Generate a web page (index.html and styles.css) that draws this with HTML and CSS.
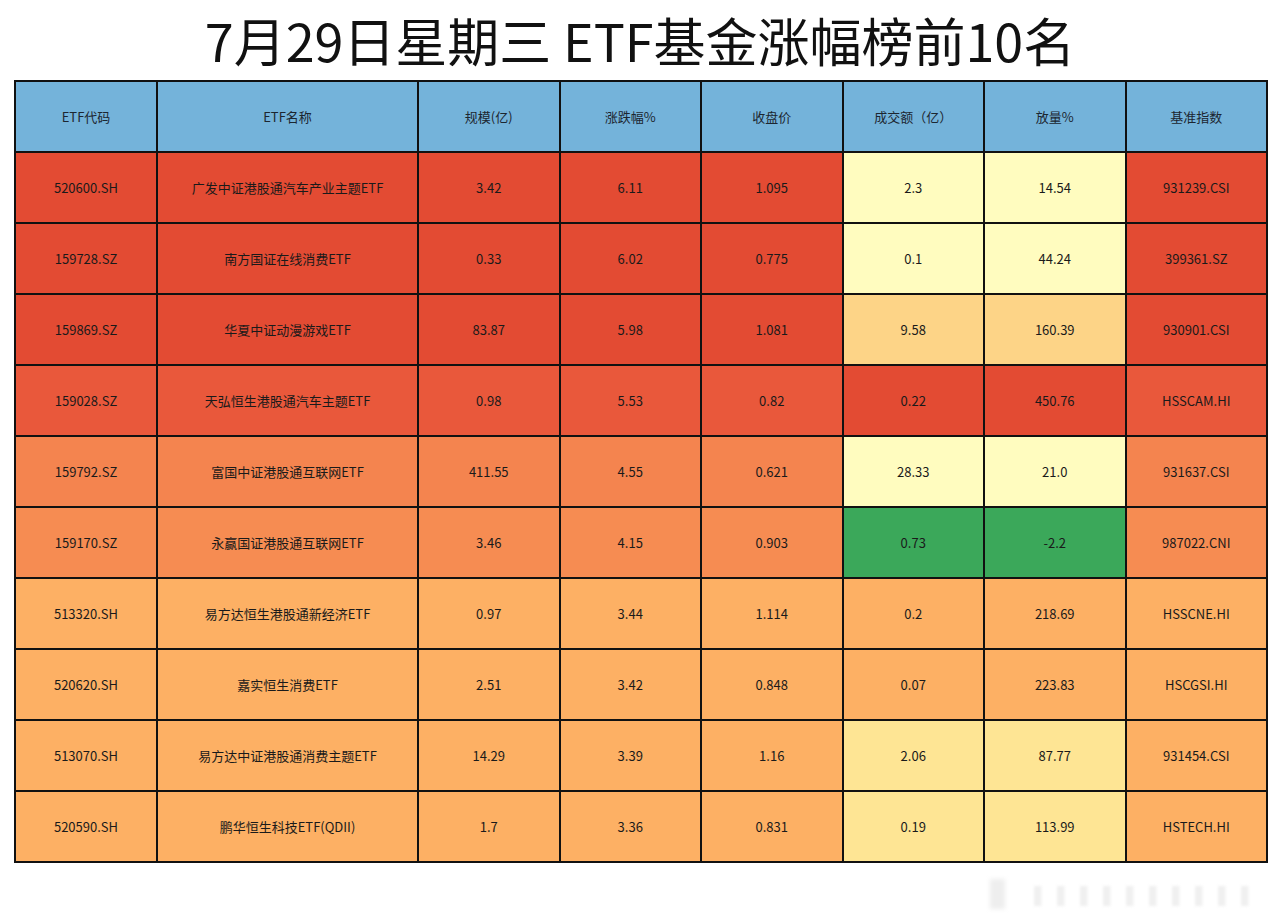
FILE: index.html
```html
<!DOCTYPE html>
<html lang="zh-CN">
<head>
<meta charset="utf-8">
<title>ETF基金涨幅榜前10名</title>
<link rel="stylesheet" href="styles.css">
</head>
<body>
<div class="page">
  <h1 class="title">7月29日星期三 ETF基金涨幅榜前10名</h1>
  <table class="grid">
    <colgroup>
      <col class="w-code"><col class="w-name"><col class="w-std"><col class="w-std"><col class="w-std"><col class="w-std"><col class="w-std"><col class="w-std">
    </colgroup>
    <thead>
      <tr class="head">
        <th>ETF代码</th><th>ETF名称</th><th>规模(亿)</th><th>涨跌幅%</th><th>收盘价</th><th>成交额（亿）</th><th>放量%</th><th>基准指数</th>
      </tr>
    </thead>
    <tbody>
      <tr class="r-red"><td>520600.SH</td><td>广发中证港股通汽车产业主题ETF</td><td>3.42</td><td>6.11</td><td>1.095</td><td class="c-pale">2.3</td><td class="c-pale">14.54</td><td>931239.CSI</td></tr>
      <tr class="r-red"><td>159728.SZ</td><td>南方国证在线消费ETF</td><td>0.33</td><td>6.02</td><td>0.775</td><td class="c-pale">0.1</td><td class="c-pale">44.24</td><td>399361.SZ</td></tr>
      <tr class="r-red"><td>159869.SZ</td><td>华夏中证动漫游戏ETF</td><td>83.87</td><td>5.98</td><td>1.081</td><td class="c-sand">9.58</td><td class="c-sand">160.39</td><td>930901.CSI</td></tr>
      <tr class="r-red2"><td>159028.SZ</td><td>天弘恒生港股通汽车主题ETF</td><td>0.98</td><td>5.53</td><td>0.82</td><td class="c-red">0.22</td><td class="c-red">450.76</td><td>HSSCAM.HI</td></tr>
      <tr class="r-org"><td>159792.SZ</td><td>富国中证港股通互联网ETF</td><td>411.55</td><td>4.55</td><td>0.621</td><td class="c-pale">28.33</td><td class="c-pale">21.0</td><td>931637.CSI</td></tr>
      <tr class="r-org2"><td>159170.SZ</td><td>永赢国证港股通互联网ETF</td><td>3.46</td><td>4.15</td><td>0.903</td><td class="c-green">0.73</td><td class="c-green">-2.2</td><td>987022.CNI</td></tr>
      <tr class="r-lt"><td>513320.SH</td><td>易方达恒生港股通新经济ETF</td><td>0.97</td><td>3.44</td><td>1.114</td><td>0.2</td><td>218.69</td><td>HSSCNE.HI</td></tr>
      <tr class="r-lt"><td>520620.SH</td><td>嘉实恒生消费ETF</td><td>2.51</td><td>3.42</td><td>0.848</td><td>0.07</td><td>223.83</td><td>HSCGSI.HI</td></tr>
      <tr class="r-lt"><td>513070.SH</td><td>易方达中证港股通消费主题ETF</td><td>14.29</td><td>3.39</td><td>1.16</td><td class="c-yel">2.06</td><td class="c-yel">87.77</td><td>931454.CSI</td></tr>
      <tr class="r-lt"><td>520590.SH</td><td>鹏华恒生科技ETF(QDII)</td><td>1.7</td><td>3.36</td><td>0.831</td><td class="c-yel">0.19</td><td class="c-yel">113.99</td><td>HSTECH.HI</td></tr>
    </tbody>
  </table>
  <div class="foot"><span class="mark-big">▌</span><span class="mark">▍▍▍▍▍▍▍▍▍▍</span></div>
</div>
</body>
</html>
```
FILE: styles.css
```css
html, body {
  margin: 0;
  padding: 0;
  background: #ffffff;
}
body {
  font-family: "Noto Sans CJK SC", "Noto Sans", sans-serif;
  color: #1a1a1a;
}
.page {
  width: 1280px;
  height: 917px;
  overflow: hidden;
}
.title {
  margin: 0;
  height: 80px;
  line-height: 80px;
  text-align: center;
  font-size: 52px;
  font-weight: 400;
  color: #111;
}
.grid {
  margin-left: 14px;
  width: 1254px;
  border-collapse: collapse;
  table-layout: fixed;
  border: 2px solid #111;
}
.w-code { width: 142px; }
.w-name { width: 261px; }
.grid th, .grid td {
  border: 2px solid #111;
  height: 69px;
  padding: 0;
  text-align: center;
  vertical-align: middle;
  font-size: 13px;
  font-weight: 400;
  line-height: 16px;
  white-space: nowrap;
}
.head th { background: #74b3da; color: #1c2630; }
.r-red td { background: #e34b33; }
.r-red2 td { background: #e9583b; }
.r-org td { background: #f4844f; }
.r-org2 td { background: #f68c52; }
.r-lt td { background: #fdb064; }
.grid td.c-pale { background: #fffcbf; }
.grid td.c-sand { background: #fdd487; }
.grid td.c-yel { background: #fee594; }
.grid td.c-green { background: #3ba85a; }
.grid td.c-red { background: #e34b33; }
.foot {
  display: flex;
  justify-content: flex-end;
  align-items: flex-end;
  gap: 14px;
  padding: 14px 16px 0 0;
}
.mark-big {
  font-size: 30px;
  line-height: 30px;
  color: #eeeeee;
  filter: blur(2px);
}
.mark {
  font-size: 20px;
  line-height: 22px;
  color: #f0f0f0;
  filter: blur(1.5px);
  letter-spacing: 3px;
}
```
